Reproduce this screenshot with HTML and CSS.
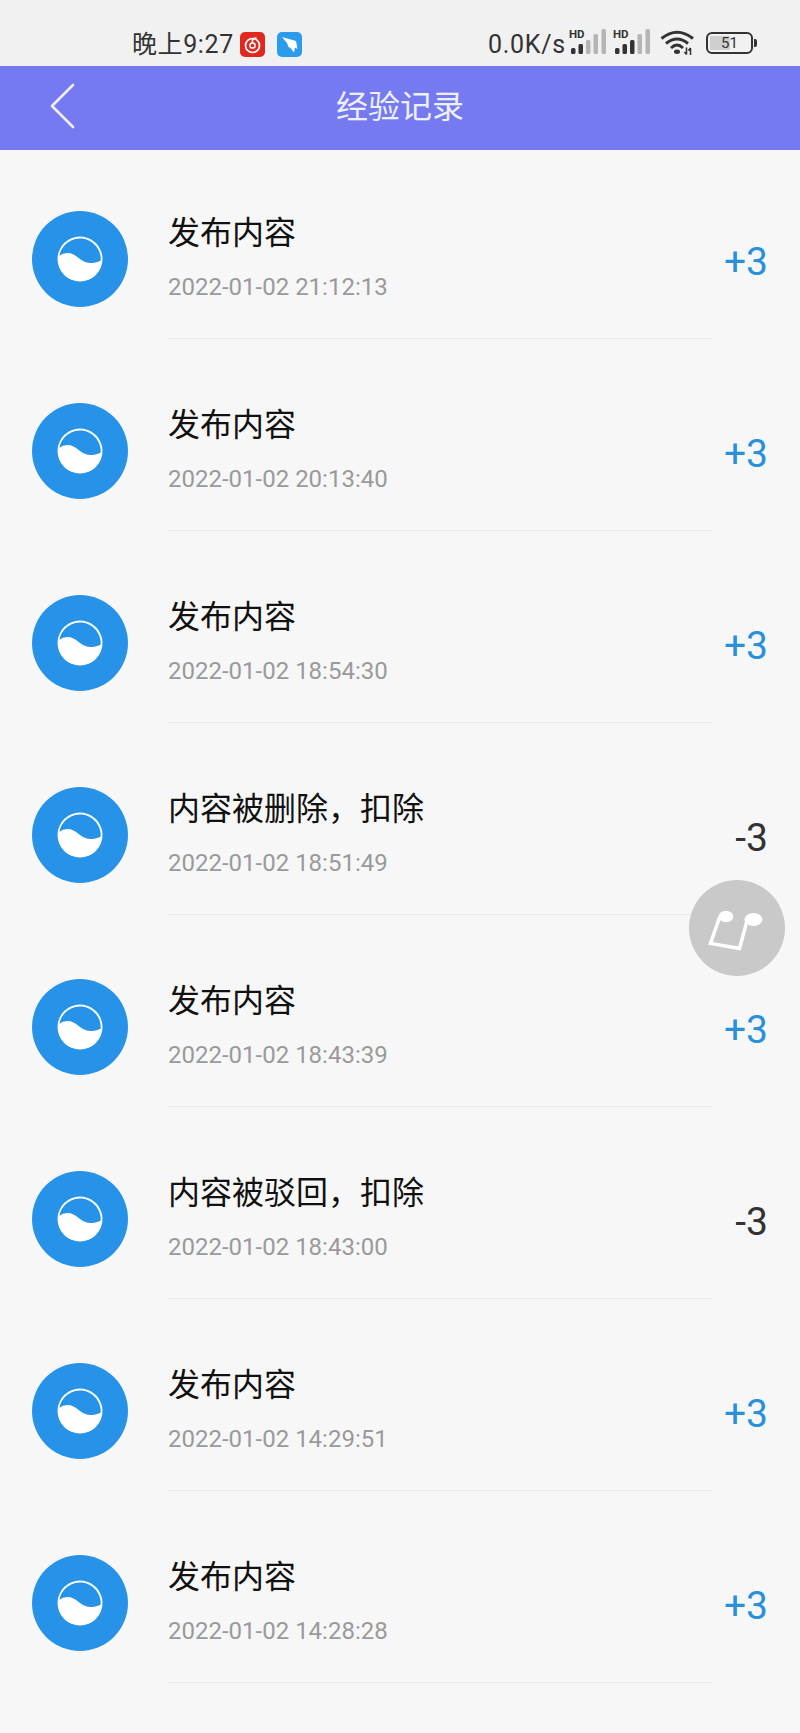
FILE: index.html
```html
<!DOCTYPE html>
<html lang="zh-CN">
<head>
<meta charset="utf-8">
<title>经验记录</title>
<link rel="stylesheet" href="styles.css">
</head>
<body>
<svg class="defs" width="0" height="0" aria-hidden="true">
  <symbol id="logo" viewBox="0 0 96 96">
    <circle cx="48" cy="48" r="48" fill="#2793e8"/>
    <circle cx="48" cy="48" r="22.500" fill="#fff"/>
    <path d="M27.400 45C30 42.500 35 41.500 39 42.500C46 44.500 49 51.500 58 52C62 52.300 66 51.500 68.700 49.600A20.800 20.800 0 0 0 27.400 45Z" fill="#2793e8"/>
  </symbol>
</svg>

<div class="status">
  <span class="clock">晚上9:27</span>
  <svg class="app-icon first" viewBox="0 0 25 25">
    <rect width="25" height="25" rx="5" fill="#e0281f"/>
    <circle cx="12.500" cy="13.500" r="7" fill="none" stroke="#fff" stroke-width="1.700"/>
    <circle cx="12.500" cy="13.500" r="2.600" fill="none" stroke="#fff" stroke-width="1.500"/>
    <path d="M12.500 11C12 8 13 5.500 16.500 6" fill="none" stroke="#fff" stroke-width="1.600"/>
  </svg>
  <svg class="app-icon" viewBox="0 0 25 25">
    <rect width="25" height="25" rx="5" fill="#2a9ceb"/>
    <path d="M5 5L19 9L20.500 17L18 15.500L17 20.500L13.500 16L11.500 15L10 11Z" fill="#fff"/>
  </svg>
  <div class="status-right">
    <span class="speed">0.0K/s</span>
    <svg class="signal" viewBox="0 0 38 28">
      <text x="0" y="9.500" class="hd">HD</text>
      <rect class="on" x="2" y="20" width="4.500" height="6" rx="1.500"/>
      <rect class="on" x="9.500" y="16" width="4.500" height="10" rx="1.500"/>
      <rect class="off" x="17" y="12" width="4.500" height="14" rx="1.500"/>
      <rect class="off" x="24.500" y="6" width="4.500" height="20" rx="1.500"/>
      <rect class="off" x="32.500" y="1" width="4.500" height="25" rx="1.500"/>
    </svg>
    <svg class="signal second" viewBox="0 0 38 28">
      <text x="0" y="9.500" class="hd">HD</text>
      <rect class="on" x="2" y="20" width="4.500" height="6" rx="1.500"/>
      <rect class="on" x="9.500" y="16" width="4.500" height="10" rx="1.500"/>
      <rect class="on" x="17" y="12" width="4.500" height="14" rx="1.500"/>
      <rect class="off" x="24.500" y="6" width="4.500" height="20" rx="1.500"/>
      <rect class="off" x="32.500" y="1" width="4.500" height="25" rx="1.500"/>
    </svg>
    <svg class="wifi" viewBox="0 0 36 26">
      <path d="M1.500 8.500Q17 -4 33 8.500" fill="none" stroke="#333" stroke-width="3"/>
      <path d="M6 13.500Q17 4.500 28 13.500" fill="none" stroke="#333" stroke-width="3"/>
      <path d="M11 18Q17 12 23 18" fill="none" stroke="#333" stroke-width="2.800"/>
      <ellipse cx="17" cy="21.800" rx="3" ry="2.200" fill="#333"/>
      <path d="M26.500 17.500V24.500M30.500 18V25M30.500 18L28.500 20.500M26.500 24.500L24.500 22" stroke="#333" stroke-width="1.500" fill="none"/>
    </svg>
    <span class="battery"><span class="battery-level">51</span></span>
    <span class="battery-cap"></span>
  </div>
</div>

<header class="nav">
  <svg class="back" viewBox="0 0 26 46"><path d="M24 2L3 23L24 44" fill="none" stroke="#eef0ff" stroke-width="2.600" stroke-linecap="round" stroke-linejoin="round"/></svg>
  <h1 class="nav-title">经验记录</h1>
</header>

<main class="list">
  <div class="row">
    <svg class="avatar"><use href="#logo"/></svg>
    <div class="info"><div class="reason">发布内容</div><div class="time">2022-01-02 21:12:13</div></div>
    <div class="points plus">+3</div>
  </div>
  <div class="row">
    <svg class="avatar"><use href="#logo"/></svg>
    <div class="info"><div class="reason">发布内容</div><div class="time">2022-01-02 20:13:40</div></div>
    <div class="points plus">+3</div>
  </div>
  <div class="row">
    <svg class="avatar"><use href="#logo"/></svg>
    <div class="info"><div class="reason">发布内容</div><div class="time">2022-01-02 18:54:30</div></div>
    <div class="points plus">+3</div>
  </div>
  <div class="row">
    <svg class="avatar"><use href="#logo"/></svg>
    <div class="info"><div class="reason">内容被删除，扣除</div><div class="time">2022-01-02 18:51:49</div></div>
    <div class="points">-3</div>
  </div>
  <div class="row">
    <svg class="avatar"><use href="#logo"/></svg>
    <div class="info"><div class="reason">发布内容</div><div class="time">2022-01-02 18:43:39</div></div>
    <div class="points plus">+3</div>
  </div>
  <div class="row">
    <svg class="avatar"><use href="#logo"/></svg>
    <div class="info"><div class="reason">内容被驳回，扣除</div><div class="time">2022-01-02 18:43:00</div></div>
    <div class="points">-3</div>
  </div>
  <div class="row">
    <svg class="avatar"><use href="#logo"/></svg>
    <div class="info"><div class="reason">发布内容</div><div class="time">2022-01-02 14:29:51</div></div>
    <div class="points plus">+3</div>
  </div>
  <div class="row">
    <svg class="avatar"><use href="#logo"/></svg>
    <div class="info"><div class="reason">发布内容</div><div class="time">2022-01-02 14:28:28</div></div>
    <div class="points plus">+3</div>
  </div>
</main>

<button class="float-btn" type="button" aria-label="music">
  <svg viewBox="0 0 96 96">
    <path d="M31 36L21.500 63.500L50.500 68.500L58.500 39" fill="none" stroke="#fff" stroke-width="3.500"/>
    <ellipse cx="37" cy="36.500" rx="7.300" ry="5.700" fill="#fff"/>
    <ellipse cx="64.500" cy="39.500" rx="9" ry="6.500" fill="#fff"/>
  </svg>
</button>
</body>
</html>
```

FILE: styles.css
```css
* {
  box-sizing: border-box;
}

html,
body {
  margin: 0;
  height: 1733px;
  overflow: hidden;
}

body {
  position: relative;
  background: #f7f7f7;
  font-family: Roboto, "Noto Sans CJK SC", sans-serif;
}

.defs {
  position: absolute;
}

/* system status bar */
.status {
  display: flex;
  align-items: center;
  height: 66px;
  padding: 22px 43px 0 132px;
  background: #f1f1f1;
  color: #333;
}

.clock {
  width: 108px;
  padding-top: 2px;
  font-size: 25px;
  line-height: 30px;
  letter-spacing: 0.600px;
  white-space: nowrap;
}

.app-icon {
  width: 25px;
  height: 25px;
  margin-right: 12px;
}

.status-right {
  display: flex;
  align-items: center;
  margin-left: auto;
}

.speed {
  width: 81px;
  padding-top: 2px;
  font-size: 25px;
  line-height: 30px;
  letter-spacing: 0.700px;
  white-space: nowrap;
}

.signal {
  width: 38px;
  height: 28px;
  margin-top: -4px;
}

.signal.second {
  margin-left: 6px;
}

.hd {
  font: 700 11.500px Roboto, sans-serif;
  fill: #333;
}

.on {
  fill: #333;
}

.off {
  fill: #b5b5b5;
}

.wifi {
  width: 36px;
  height: 26px;
  margin-left: 9px;
  margin-top: -2px;
}

.battery {
  display: block;
  width: 47px;
  height: 22px;
  margin-left: 10px;
  margin-top: -2px;
  padding: 2px;
  border: 2.500px solid #333;
  border-radius: 6px;
}

.battery-level {
  display: block;
  height: 100%;
  width: 100%;
  font-size: 15px;
  line-height: 14px;
  text-align: center;
  background: linear-gradient(90deg, #cfcfcf 51%, transparent 51%);
}

.battery-cap {
  display: block;
  width: 3px;
  height: 8px;
  margin-left: 1px;
  margin-top: -2px;
  border-radius: 0 2px 2px 0;
  background: #333;
}

/* title bar */
.nav {
  position: relative;
  height: 84px;
  background: #757af0;
}

.back {
  position: absolute;
  left: 49px;
  top: 17px;
  width: 26px;
  height: 46px;
}

.nav-title {
  margin: 0;
  color: #eef0ff;
  font-size: 32px;
  font-weight: 400;
  line-height: 82px;
  text-align: center;
}

/* record list */
.list {
  padding-top: 61px;
}

.row {
  display: flex;
  height: 192px;
  padding-left: 32px;
}

.avatar {
  flex: none;
  width: 96px;
  height: 96px;
}

.info {
  flex: 1;
  height: 128px;
  margin-left: 40px;
  padding-top: 1px;
  border-bottom: 1px solid #ebebeb;
}

.reason {
  color: #111;
  font-size: 32px;
  line-height: 42px;
}

.time {
  margin-top: 18px;
  color: #9a9a9a;
  font-size: 24px;
  line-height: 30px;
}

.points {
  flex: none;
  width: 88px;
  padding: 27px 32px 0 0;
  color: #333;
  font-size: 39px;
  line-height: 48px;
  text-align: right;
}

.points.plus {
  color: #2b90da;
}

/* floating music button */
.float-btn {
  position: absolute;
  left: 689px;
  top: 880px;
  width: 96px;
  height: 96px;
  padding: 0;
  border: 0;
  border-radius: 50%;
  background: #c9c9c9;
}

.float-btn svg {
  display: block;
  width: 96px;
  height: 96px;
}
```
